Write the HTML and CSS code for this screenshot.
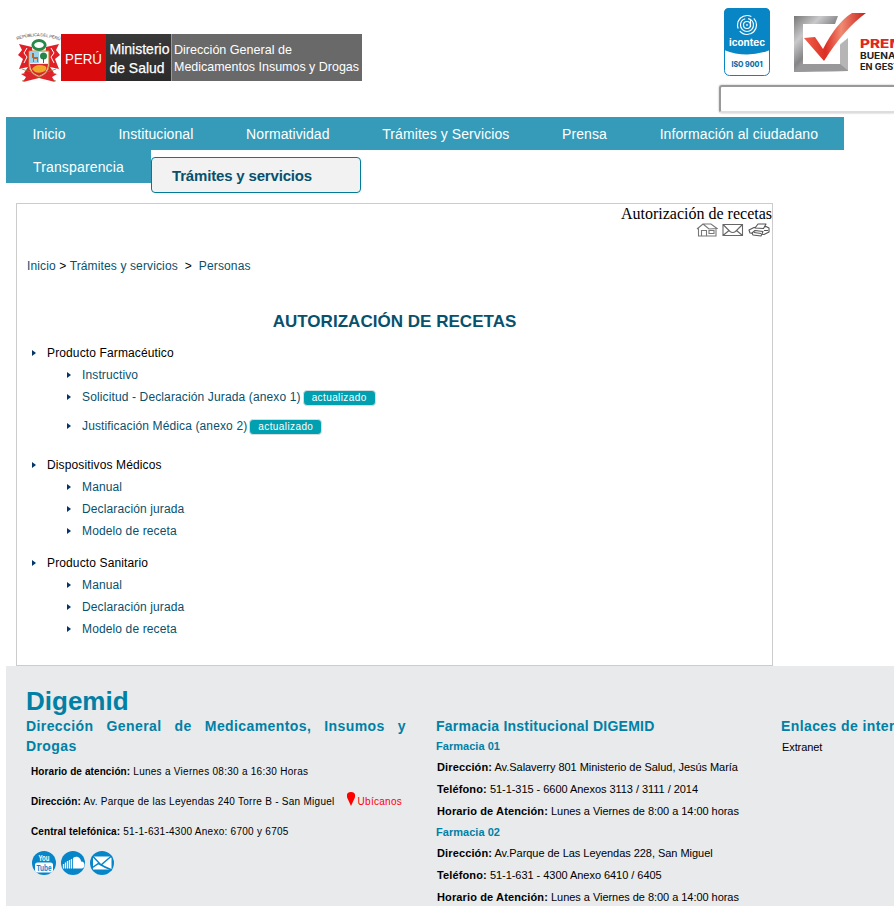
FILE: index.html
```html
<!DOCTYPE html>
<html lang="es">
<head>
<meta charset="utf-8">
<title>Digemid - Autorización de recetas</title>
<link rel="stylesheet" href="styles.css">
</head>
<body>
<header class="header">
  <svg class="brand" width="352" height="58" viewBox="0 0 352 58">
    <defs>
      <linearGradient id="dark" x2="0" y2="1"><stop stop-color="#393939"/><stop offset="1" stop-color="#2b2b2b"/></linearGradient>
      <path id="arc" d="M7 15 Q28 7 51 16"/>
    </defs>
    <text class="crest-text"><textPath href="#arc" textLength="44">REPÚBLICA DEL PERÚ</textPath></text>
    <path d="M22 22 9 19 12 25 8 30 13 34 9 44 18 42 14 48 24 48ZM36 22 49 19 46 25 50 30 45 34 49 44 40 42 44 48 34 48Z" fill="#e01f26"/>
    <path d="M17 23 14 28 17 32 14 38M41 23 44 28 41 32 44 38" fill="none" stroke="#fff"/>
    <path d="M12 44 46 56M46 44 12 56" stroke="#9c7430" stroke-width=".8"/>
    <path d="M11 49 24 46 29 51 34 46 47 49 42 52 45 57 29 53 13 57 16 52Z" fill="#dc252b"/>
    <path d="M19 26H39V41Q38 49 29 52Q20 49 19 41Z" fill="#f7e7cf" stroke="#bc8b3d"/>
    <path d="M20 27H29V38H20Z" fill="#9bd1ea"/><path d="M29 27H38V38H29Z" fill="#fff"/>
    <path d="M22 28h2v4h4v5h-1v-3h-3v3h-1v-4h-1Z" fill="#b9682a"/>
    <circle cx="33.500" cy="31" r="3.500" fill="#268748"/><path d="M33 33h1v5h-1Z" fill="#78502a"/>
    <path d="M20 39H38Q38 48 29 51Q20 48 20 39Z" fill="#d6282d"/>
    <path d="M22 44Q26 38 35 41Q38 43 35 46Q30 49 25 47Z" fill="#f0a82b"/>
    <ellipse cx="29" cy="20" rx="6.200" ry="4.500" fill="#fff" stroke="#268849" stroke-width="2.800"/>
    <path d="M51 9H96V56H51Z" fill="#d90a0c"/>
    <path d="M96 9H161V56H96Z" fill="url(#dark)"/>
    <path d="M161 9H352V56H161Z" fill="#696969"/>
    <path d="M161.500 9V56" stroke="#999"/>
    <g class="brand-text">
      <text x="55" y="39" font-size="15.500" textLength="37" lengthAdjust="spacingAndGlyphs">PERÚ</text>
      <text x="99.500" y="29" font-size="15" textLength="60" lengthAdjust="spacingAndGlyphs" class="strong">Ministerio</text>
      <text x="99.500" y="47.500" font-size="15" textLength="55" lengthAdjust="spacingAndGlyphs" class="strong">de Salud</text>
      <text x="164" y="29" font-size="13.500" textLength="118" lengthAdjust="spacingAndGlyphs">Dirección General de</text>
      <text x="164" y="46" font-size="13.500" textLength="185" lengthAdjust="spacingAndGlyphs">Medicamentos Insumos y Drogas</text>
    </g>
  </svg>
  <div class="header-right">
    <svg class="awards" width="180" height="78" viewBox="714 0 180 78">
      <defs>
        <linearGradient id="steel" x2="1" y2="1"><stop stop-color="#777"/><stop offset=".25" stop-color="#c9c9cb"/><stop offset=".45" stop-color="#858587"/><stop offset=".7" stop-color="#ddd"/><stop offset="1" stop-color="#747476"/></linearGradient>
        <linearGradient id="red" x2="1" y2="0"><stop stop-color="#f0604c"/><stop offset=".35" stop-color="#dc2f24"/><stop offset=".6" stop-color="#f08a72"/><stop offset="1" stop-color="#c91f17"/></linearGradient>
      </defs>
      <rect x="724.500" y="8.500" width="45" height="67" rx="5" fill="#fff" stroke="#0785c5"/>
      <path d="M724 50V13Q724 8 729 8H765Q770 8 770 13V50Q747 59 724 50Z" fill="#0785c5"/>
      <g fill="none" stroke="#fff" stroke-width="1.200">
        <circle cx="747" cy="25" r="9.500" stroke-dasharray="23 3"/><circle cx="747" cy="25" r="6.500" stroke-dasharray="28 3"/><circle cx="747" cy="25" r="3.500"/><path d="M750.500 20V27M747 24v2"/>
      </g>
      <text class="logo-name" x="729" y="45.500" textLength="36" lengthAdjust="spacingAndGlyphs">icontec</text>
      <text class="iso" x="731.500" y="67" textLength="31" lengthAdjust="spacingAndGlyphs">ISO 9001</text>
      <path fill-rule="evenodd" d="M794 16 838 16 835 24 803 24 803 64 840 64 840 44 848 38 848 71 794 72Z" fill="url(#steel)"/>
      <path d="M840 45 848 38V71L840 64Z" fill="#b5b5b6"/><path d="M794 72 803 64H840L848 71Z" fill="#98989a"/>
      <path d="M804 38 815 37 823 49Q837 22 852 13L866 13Q844 29 824 61Z" fill="url(#red)"/>
      <text class="prize red" x="860" y="48" textLength="60" lengthAdjust="spacingAndGlyphs">PREMIO</text>
      <text class="prize small" x="860" y="59" textLength="42" lengthAdjust="spacingAndGlyphs">BUENAS</text>
      <text class="prize small" x="860" y="69.500" textLength="56" lengthAdjust="spacingAndGlyphs">EN GESTIÓN</text>
    </svg>
    <div class="search"></div>
  </div>
</header>
<nav class="nav">
  <div class="nav-row"><a>Inicio</a><a>Institucional</a><a>Normatividad</a><a>Trámites y Servicios</a><a>Prensa</a><a>Información al ciudadano</a></div>
  <div class="nav-tail"><a>Transparencia</a><h2 class="section">Trámites y servicios</h2></div>
</nav>
<main class="panel">
  <div class="page-name">Autorización de recetas</div>
  <div class="tools">
    <svg width="22" height="14" viewBox="0 0 22 14"><g fill="none" stroke="#777" stroke-width="1.100"><path d="M1 6 7 1H15L21 5.500 13 6 7 1 1 6M2.500 5.500V13H20V5.500M5.500 13V7.500H10.500V13M13 7.500h5v3h-5Z"/></g></svg>
    <svg width="22" height="14" viewBox="0 0 22 14"><path d="M1 1.500H20.500V12.500H1ZL8 8.500Q10.800 10.500 13.500 8.500L20.500 1.500M1 12.500 7 7.500M20.500 12.500 14.500 7.500" fill="none" stroke="#666" stroke-width="1.100"/></svg>
    <svg width="22" height="14" viewBox="0 0 22 14"><g fill="#fff" stroke="#555" stroke-width="1.100" stroke-linejoin="round"><path d="M1 7 6 4.500 18 3.500 21 5V9L16 11.500 2 10Z"/><path d="M7 5 10 1H18L15.500 5.500Z"/><path d="M4 10 7 7.500 15 8.500 13 13 5 12Z"/></g><path d="M6 9.500 13 10.500M16 7.500H20" stroke="#555"/></svg>
  </div>
  <div class="crumbs"><a>Inicio</a> &gt; <a>Trámites y servicios</a>&nbsp; &gt;&nbsp; <a>Personas</a></div>
  <h1 class="title">AUTORIZACIÓN DE RECETAS</h1>
  <ul class="groups">
    <li><span>Producto Farmacéutico</span>
      <ul>
        <li><a>Instructivo</a></li>
        <li><a>Solicitud - Declaración Jurada (anexo 1)</a><b class="badge">actualizado</b></li>
        <li class="spaced"><a>Justificación Médica (anexo 2)</a><b class="badge">actualizado</b></li>
      </ul>
    </li>
    <li class="second"><span>Dispositivos Médicos</span>
      <ul><li><a>Manual</a></li><li><a>Declaración jurada</a></li><li><a>Modelo de receta</a></li></ul>
    </li>
    <li class="third"><span>Producto Sanitario</span>
      <ul><li><a>Manual</a></li><li><a>Declaración jurada</a></li><li><a>Modelo de receta</a></li></ul>
    </li>
  </ul>
</main>
<footer class="footer">
  <section class="about">
    <h2>Digemid</h2>
    <h3>Dirección General de Medicamentos, Insumos y Drogas</h3>
    <p><b>Horario de atención:</b> Lunes a Viernes 08:30 a 16:30 Horas</p>
    <p><b>Dirección:</b> Av. Parque de las Leyendas 240 Torre B - San Miguel <a class="locate"><svg width="8" height="14" viewBox="0 0 8 14"><path d="M4 0C-1-.1-.8 4.700 1 7.500L4 14 7 7.500C8.800 4.700 9-.1 4 0Z" fill="red"/></svg>Ubícanos</a></p>
    <p><b>Central telefónica:</b> 51-1-631-4300 Anexo: 6700 y 6705</p>
    <div class="social">
      <svg width="24" height="24" viewBox="0 0 24 24"><circle cx="12" cy="12" r="12" fill="#0785c9"/><text x="6.500" y="10" textLength="11" lengthAdjust="spacingAndGlyphs" fill="#fff">You</text><rect x="3" y="11.500" width="18" height="10" rx="2.500" fill="#fff"/><text x="4.500" y="19.800" textLength="15" lengthAdjust="spacingAndGlyphs" fill="#0785c9">Tube</text></svg>
      <svg width="24" height="24" viewBox="0 0 24 24"><circle cx="12" cy="12" r="12" fill="#0785c9"/><path d="M12 17.500V7C16 4 20 7 20 10.500C24.500 10 24.500 17.500 20.500 17.500Z" fill="#fff"/><path d="M2.500 13v4.500M4.500 11.500v6M6.500 10v7.500M8.500 9v8.500M10.500 8v9.500" stroke="#fff" stroke-width="1.300"/></svg>
      <svg width="24" height="24" viewBox="0 0 24 24"><circle cx="12" cy="12" r="12" fill="#0785c9"/><path d="M4 5.500H20L21.500 7V18.500H3V7Z" fill="#fff"/><path d="M3 5.500 11 14 21.500 5M2.500 16.500 8.500 12.500Q15 16.500 22 19" fill="none" stroke="#0785c9" stroke-width="1.500"/></svg>
    </div>
  </section>
  <section class="pharmacy">
    <h3>Farmacia Institucional DIGEMID</h3>
    <h4>Farmacia 01</h4>
    <p><b>Dirección:</b> Av.Salaverry 801 Ministerio de Salud, Jesús María</p>
    <p><b>Teléfono:</b> 51-1-315 - 6600 Anexos 3113 / 3111 / 2014</p>
    <p><b>Horario de Atención:</b> Lunes a Viernes de 8:00 a 14:00 horas</p>
    <h4>Farmacia 02</h4>
    <p><b>Dirección:</b> Av.Parque de Las Leyendas 228, San Miguel</p>
    <p><b>Teléfono:</b> 51-1-631 - 4300 Anexo 6410 / 6405</p>
    <p><b>Horario de Atención:</b> Lunes a Viernes de 8:00 a 14:00 horas</p>
  </section>
  <section class="links"><h3>Enlaces de interés</h3><p>Extranet</p></section>
</footer>
</body>
</html>
```
FILE: styles.css
```css
* { box-sizing: border-box; }
html { overflow: hidden; }
body { margin: 0; width: 894px; height: 906px; overflow: hidden; background: #fff; font-family: "Liberation Sans", Arial, sans-serif; color: #000; }
h1, h2, h3, h4, p, ul { margin: 0; padding: 0; }
ul { list-style: none; }
.header { height: 117px; display: flex; overflow: hidden; }
.brand { flex: none; margin: 25px 0 0 10px; }
.brand-text { fill: #fff; }
.strong { stroke: #fff; stroke-width: .25; }
.crest-text { font-size: 4.3px; fill: #444; }
.header-right { margin-left: 352px; width: 180px; flex: none; overflow: hidden; }
.awards { display: block; }
.logo-name { font: bold 9.5px Inter, sans-serif; fill: #fff; }
.iso { font: 800 7px Inter, sans-serif; fill: #0b6da5; }
.prize { font: 800 11.5px Inter, sans-serif; fill: #222; }
.prize.small { font-size: 8.7px; font-weight: 700; }
.prize.red { fill: #e1261c; }
.search { margin: 7px 0 0 5px; width: 175px; height: 28px; border: 2px solid #999; border-bottom-color: #ddd; border-right: 0; border-radius: 3px 0 0 3px; box-shadow: 0 0 2px #aaa; }
.nav { margin-left: 6px; font-size: 14px; color: #fff; letter-spacing: .08px; }
.nav-row { width: 838px; height: 33px; display: flex; justify-content: space-between; padding: 0 26px 0 26.5px; background: #359bb9; line-height: 34px; white-space: nowrap; }
.nav-tail { display: flex; height: 53px; }
.nav-tail a { width: 145px; height: 33px; padding-left: 27px; line-height: 34px; background: #359bb9; letter-spacing: .15px; }
.section { width: 210px; height: 36px; margin-top: 7px; padding-left: 20px; border: 1px solid #007c9b; border-radius: 4px; background: #f2f2f2; color: #07516d; font-size: 15px; line-height: 36px; letter-spacing: -.17px; }
.panel { margin-left: 16px; width: 757px; height: 463px; border: 1px solid #ccc; font-size: 12px; letter-spacing: .13px; }
.page-name { height: 19px; text-align: right; font: 16px/20px "Liberation Serif", serif; letter-spacing: 0; }
.tools { display: flex; justify-content: flex-end; gap: 4px; height: 14px; padding-right: 2px; }
.crumbs { height: 16px; margin: 21px 0 0 10px; line-height: 16px; }
.crumbs a, .groups a { color: #07516d; }
.title { height: 24px; margin-top: 36px; text-align: center; font-size: 17px; line-height: 24px; color: #07516d; letter-spacing: .03px; }
.groups { padding-top: 8px; }
.groups span, .groups ul li { display: flex; align-items: center; height: 22px; white-space: nowrap; }
.groups span::before, .groups ul li::before { content: ""; flex: none; width: 0; height: 0; border: 3px solid transparent; border-left: 4px solid #033568; border-right: 0; margin: 0 11px 0 15px; }
.groups ul li { padding-left: 35px; }
.groups ul .spaced { margin-top: 7px; }
.second { margin-top: 17px; }
.third { margin-top: 10px; }
.badge { width: 73px; height: 16px; margin: 2px 0 0 2px; border: 1px solid #d5dfe0; border-radius: 4px; background: #00a0b0; color: #fff; font-size: 10px; font-weight: normal; line-height: 14px; text-align: center; letter-spacing: .4px; }
.footer { margin-left: 6px; width: 888px; height: 240px; padding: 20px 0 0 20px; display: flex; background: #e8eaec; overflow: hidden; }
.footer section { flex: none; }
.footer h3 { color: #0080a5; font-size: 14px; line-height: 20px; letter-spacing: .4px; }
.about { width: 380px; margin-right: 30px; }
.about h2 { height: 30px; color: #0080a5; font-size: 26px; line-height: 31px; }
.about h3 { text-align: justify; }
.about p { height: 30px; padding-left: 5px; line-height: 32px; font-size: 10px; white-space: nowrap; letter-spacing: .27px; }
.about b { letter-spacing: .1px; }
.locate { margin-left: 9px; color: red; }
.locate svg { margin-right: 3px; vertical-align: -1px; }
.social { display: flex; gap: 5px; padding: 5px 0 0 6px; }
.social text { font: bold 9px "Liberation Sans", sans-serif; }
.pharmacy { width: 345px; padding-top: 30px; }
.footer .pharmacy h3 { letter-spacing: .23px; }
.pharmacy h4 { height: 20px; color: #0080a5; font-size: 11px; line-height: 20px; letter-spacing: .03px; }
.pharmacy p { height: 22px; padding-left: 1px; font-size: 11px; line-height: 23px; white-space: nowrap; letter-spacing: -.04px; }
.pharmacy b { letter-spacing: .13px; }
.links { width: 113px; padding-top: 30px; overflow: hidden; white-space: nowrap; }
.links p { padding-left: 1px; font-size: 11px; line-height: 23px; letter-spacing: -.1px; }
```
